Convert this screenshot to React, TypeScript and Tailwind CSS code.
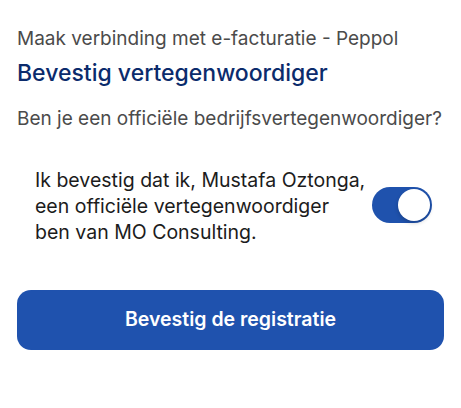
export default function App() {
  return (
    <div
      className="w-[461px] h-[408px] bg-white flex flex-col px-[17px] pt-[27px]"
      style={{ fontFamily: "Inter, 'Noto Sans', sans-serif" }}
    >
      <p className="text-[19px] leading-[24px] text-[#4b4b4b]">
        Maak verbinding met e-facturatie - Peppol
      </p>
      <h1 className="mt-[8px] text-[23px] leading-[28px] font-medium text-[#0b2b6c]">
        Bevestig vertegenwoordiger
      </h1>
      <p className="mt-[20px] text-[19px] leading-[24px] text-[#4b4b4b]">
        Ben je een officiële bedrijfsvertegenwoordiger?
      </p>
      <div className="mt-[36px] flex items-center justify-between pl-[18px] pr-[12px]">
        <p className="text-[19.5px] leading-[26px] text-[#1c1c1c]">
          Ik bevestig dat ik, Mustafa Oztonga,
          <br />
          een officiële vertegenwoordiger
          <br />
          ben van MO Consulting.
        </p>
        <button
          type="button"
          className="relative w-[60px] h-[36px] rounded-full bg-[#1f52ad] shrink-0 mt-[-2px]"
        >
          <span className="absolute right-[2px] top-[2px] w-[32px] h-[32px] rounded-full bg-white shadow-[0_2px_4px_rgba(0,0,0,0.2)]" />
        </button>
      </div>
      <button
        type="button"
        className="mt-[45px] h-[60px] w-full rounded-[14px] bg-[#1f52ae] text-white text-[19.5px] font-semibold"
      >
        Bevestig de registratie
      </button>
    </div>
  );
}
